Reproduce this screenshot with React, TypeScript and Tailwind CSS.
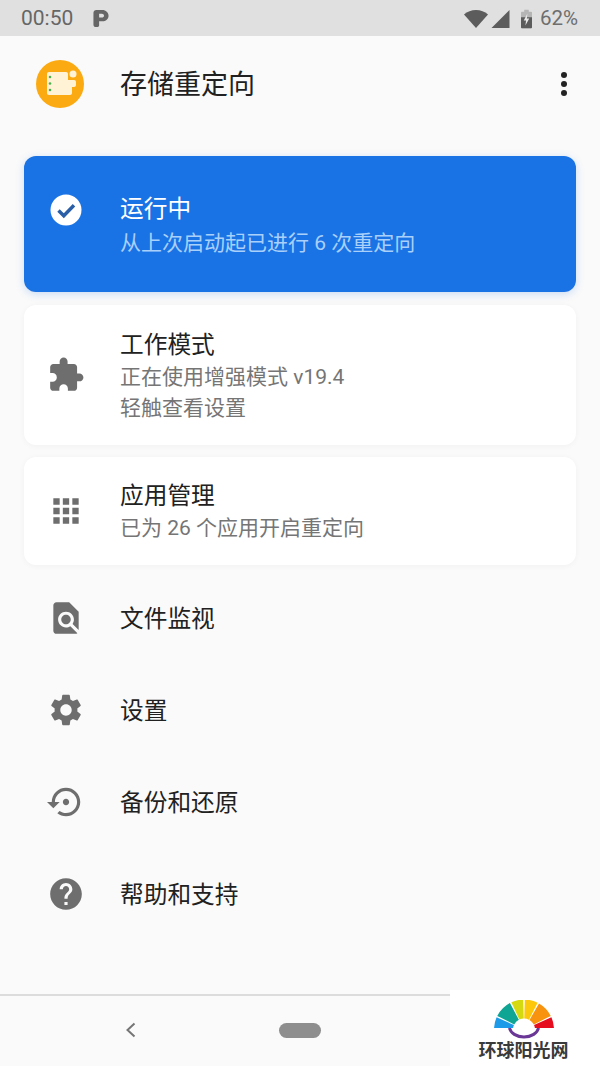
import { FC, ReactNode } from "react";

const cjk = "font-['Roboto','Noto_Sans_CJK_SC',sans-serif]";

const Icon: FC<{ d: string; className?: string }> = ({ d, className }) => (
  <svg viewBox="0 0 24 24" className={className} fill="currentColor">
    <path d={d} />
  </svg>
);

const paths = {
  extension:
    "M20.5 11H19V7c0-1.1-.9-2-2-2h-4V3.5C13 2.12 11.88 1 10.5 1S8 2.12 8 3.5V5H4c-1.1 0-1.99.9-1.99 2v3.8H3.5c1.49 0 2.7 1.21 2.7 2.7s-1.21 2.7-2.7 2.7H2V20c0 1.1.9 2 2 2h3.8v-1.5c0-1.49 1.21-2.7 2.7-2.7 1.49 0 2.7 1.21 2.7 2.7V22H17c1.1 0 2-.9 2-2v-4h1.5c1.38 0 2.5-1.12 2.5-2.5S21.88 11 20.5 11z",
  apps: "M4 8h4V4H4v4zm6 12h4v-4h-4v4zm-6 0h4v-4H4v4zm0-6h4v-4H4v4zm6 0h4v-4h-4v4zm6-10v4h4V4h-4zm-6 4h4V4h-4v4zm6 6h4v-4h-4v4zm0 6h4v-4h-4v4z",
  find: "M20 19.59V8l-6-6H6c-1.1 0-1.99.9-1.99 2L4 20c0 1.1.89 2 1.99 2H18c.45 0 .85-.15 1.19-.4l-4.43-4.43c-.8.52-1.74.83-2.76.83-2.76 0-5-2.24-5-5s2.24-5 5-5 5 2.24 5 5c0 1.02-.31 1.96-.83 2.75L20 19.59zM9 13c0 1.66 1.34 3 3 3s3-1.34 3-3-1.34-3-3-3-3 1.34-3 3z",
  settings:
    "M19.14 12.94c.04-.3.06-.61.06-.94 0-.32-.02-.64-.07-.94l2.03-1.58c.18-.14.23-.41.12-.61l-1.92-3.32c-.12-.22-.37-.29-.59-.22l-2.39.96c-.5-.38-1.03-.7-1.62-.94l-.36-2.54c-.04-.24-.24-.41-.48-.41h-3.84c-.24 0-.43.17-.47.41l-.36 2.54c-.59.24-1.13.57-1.62.94l-2.39-.96c-.22-.08-.47 0-.59.22L2.74 8.87c-.12.21-.08.47.12.61l2.03 1.58c-.05.3-.09.63-.09.94s.02.64.07.94l-2.03 1.58c-.18.14-.23.41-.12.61l1.92 3.32c.12.22.37.29.59.22l2.39-.96c.5.38 1.03.7 1.62.94l.36 2.54c.05.24.24.41.48.41h3.84c.24 0 .44-.17.47-.41l.36-2.54c.59-.24 1.13-.56 1.62-.94l2.39.96c.22.08.47 0 .59-.22l1.92-3.32c.12-.22.07-.47-.12-.61l-2.01-1.58zM12 15.6c-1.98 0-3.6-1.62-3.6-3.6s1.62-3.6 3.6-3.6 3.6 1.62 3.6 3.6-1.62 3.6-3.6 3.6z",
  restore:
    "M14 12c0-1.1-.9-2-2-2s-2 .9-2 2 .9 2 2 2 2-.9 2-2zm-2-9c-4.97 0-9 4.03-9 9H0l4 4 4-4H5c0-3.87 3.13-7 7-7s7 3.13 7 7-3.13 7-7 7c-1.51 0-2.91-.49-4.06-1.3l-1.42 1.44C8.04 20.3 9.94 21 12 21c4.97 0 9-4.03 9-9s-4.03-9-9-9z",
  help: "M12 2C6.48 2 2 6.48 2 12s4.48 10 10 10 10-4.48 10-10S17.52 2 12 2zm1 17h-2v-2h2v2zm2.07-7.75l-.9.92C13.45 12.9 13 13.5 13 15h-2v-.5c0-1.1.45-2.1 1.17-2.83l1.24-1.26c.37-.36.59-.86.59-1.41 0-1.1-.9-2-2-2s-2 .9-2 2H8c0-2.21 1.79-4 4-4s4 1.79 4 4c0 .88-.36 1.68-.93 2.25z",
};

const StatusBar = () => (
  <div className="flex h-9 items-center bg-[#e0e0e0] pl-[21px] pr-[22px] pt-[1px] text-[#666]">
    <span className="text-[21px]">00:50</span>
    <svg viewBox="0 0 16 18" className="ml-[20px] h-[17px] w-[16px]" fill="currentColor">
      <path
        fillRule="evenodd"
        d="M3 0h6.500C13 0 16 2.600 16 6s-3 6-6.500 6H6v4.500c0 .8-.7 1.500-1.500 1.500h-2C1.200 18 0 16.800 0 15.500V3C0 1.300 1.300 0 3 0zm3 4v4h3c1.200 0 2.200-.9 2.200-2S10.200 4 9 4H6z"
      />
    </svg>
    <div className="ml-auto flex items-center text-[#5c5c5c]">
      <svg viewBox="0 0 24 18" className="h-[18px] w-[24px]" fill="currentColor">
        <path d="M12 18 0 4.500C3.200 1.700 7.400 0 12 0s8.800 1.700 12 4.500L12 18z" />
      </svg>
      <svg viewBox="0 0 18 18" className="ml-[3px] h-[18px] w-[19px]" fill="currentColor">
        <path d="M18 0v18H0L18 0z" />
      </svg>
      <svg viewBox="0 0 12 20" className="ml-[11px] h-[20px] w-[11px]">
        <path d="M3.500 0h5v2H11c.6 0 1 .4 1 1v16c0 .6-.4 1-1 1H1c-.6 0-1-.4-1-1V3c0-.6.4-1 1-1h2.500V0z" fill="#b5b5b5" />
        <path d="M0 8h12v11c0 .6-.4 1-1 1H1c-.6 0-1-.4-1-1V8z" fill="#5c5c5c" />
        <path d="M7 4 3 11.500h2.500L4.800 17 9 9.500H6.400L7 4z" fill="#e8e8e8" />
      </svg>
      <span className="ml-[8px] text-[20.500px] text-[#6e6e6e]">62%</span>
    </div>
  </div>
);

const Logo = () => (
  <div className="flex h-12 w-12 items-center justify-center rounded-full bg-[#fbaa12]">
    <svg viewBox="0 0 48 48" className="h-12 w-12">
      <path d="M13 12h17c1.200 0 2 .8 2 2v6h6c1.200 0 2 .8 2 2v3c0 1.200-.8 2-2 2h-2v6c0 1.200-.8 2-2 2H13c-1.200 0-2-.8-2-2V14c0-1.200.8-2 2-2z" fill="#fff2d5" />
      <circle cx="37" cy="14" r="3.500" fill="#fff2d5" />
      <circle cx="14" cy="17" r="1.300" fill="#4caf50" />
      <circle cx="14" cy="23.500" r="1.300" fill="#4caf50" />
      <circle cx="14" cy="30" r="1.300" fill="#4caf50" />
    </svg>
  </div>
);

const Row: FC<{ icon: ReactNode; title: string; lines?: string[]; className?: string }> = ({ icon, title, lines, className }) => (
  <div className={`flex items-center ${className ?? ""}`}>
    <div className="flex w-[96px] shrink-0 items-center pl-[23px]">{icon}</div>
    <div className="pt-[2px]">
      <div className="text-[23.700px] leading-[33px] text-[#212121]">{title}</div>
      {lines?.map((l) => (
        <div key={l} className="text-[21px] leading-[31px] text-[#757575]">
          {l}
        </div>
      ))}
    </div>
  </div>
);

// one slice of the coloured fan, angles in degrees
const sector = (a: number, b: number) => {
  const [cx, cy, R, r] = [30, 29.500, 30, 11];
  const p = (rad: number, deg: number) =>
    `${(cx + rad * Math.cos((deg * Math.PI) / 180)).toFixed(2)} ${(cy - rad * Math.sin((deg * Math.PI) / 180)).toFixed(2)}`;
  return `M${p(r, a)} L${p(R, a)} A${R} ${R} 0 0 1 ${p(R, b)} L${p(r, b)} A${r} ${r} 0 0 0 ${p(r, a)} Z`;
};

const fan = [
  { a: 180, b: 156, c: "#1e9be8" },
  { a: 153, b: 118, c: "#0fa594" },
  { a: 115, b: 91.500, c: "#d5d90f" },
  { a: 88.500, b: 63, c: "#fdc70b" },
  { a: 60, b: 27, c: "#f7930e" },
  { a: 24, b: 0, c: "#e60d1e" },
];

const Watermark = () => (
  <div className="absolute bottom-0 right-0 flex h-[76px] w-[150px] flex-col items-center bg-white pr-[3px] pt-[10px]">
    <svg viewBox="0 0 60 28" className="h-[28px] w-[60px]">
      {fan.map((s) => (
        <path key={s.c} d={sector(s.a, s.b)} fill={s.c} />
      ))}
    </svg>
    <svg viewBox="0 0 32 11" className="h-[11px] w-[32px]" fill="none">
      <path d="M1.500 0c1 5 7 9 14.500 9S29.500 5 30.500 0" stroke="#6a3796" strokeWidth="3" />
    </svg>
    <div className="mt-[3px] font-['Liberation_Serif','Noto_Sans_CJK_SC',serif] text-[18px] font-bold leading-[18px] text-[#3a3a3a]">
      环球阳光网
    </div>
  </div>
);

export default function App() {
  const iconCls = "h-[38px] w-[38px] text-[#6e6e6e]";
  return (
    <div className={`relative flex h-[1066px] w-[600px] flex-col overflow-hidden bg-[#fafafa] ${cjk}`}>
      <StatusBar />
      <div className="flex h-[96px] items-center pl-[36px] pr-[33px]">
        <Logo />
        <div className="ml-[36px] pt-[3px] text-[27px] leading-none text-[#212121]">存储重定向</div>
        <div className="ml-auto flex flex-col gap-[3px]">
          <span className="h-[6px] w-[6px] rounded-full bg-[#222]" />
          <span className="h-[6px] w-[6px] rounded-full bg-[#222]" />
          <span className="h-[6px] w-[6px] rounded-full bg-[#222]" />
        </div>
      </div>

      <div className="mx-6 mt-6 flex flex-col">
        <div className="flex h-[136px] items-start rounded-xl bg-[#1a73e4] pt-[36px] shadow-[0_2px_8px_rgba(26,115,228,0.22)]">
          <div className="mt-[-1px] flex w-[96px] shrink-0 items-center pl-[23px]">
            <svg viewBox="0 0 38 38" className="h-[38px] w-[38px]">
              <circle cx="19" cy="19" r="15.500" fill="#fff" />
              <path d="m11.500 19.500 5.300 5.300 10.200-10.600" stroke="#2a5fa8" strokeWidth="3.400" fill="none" />
            </svg>
          </div>
          <div>
            <div className="text-[23.700px] leading-[34px] text-white">运行中</div>
            <div className="text-[21px] leading-[34px] text-[#a9d0fb]">从上次启动起已进行 6 次重定向</div>
          </div>
        </div>

        <Row
          className="mt-[13px] h-[140px] rounded-xl bg-white shadow-[0_1px_6px_rgba(0,0,0,0.04)]"
          icon={<Icon d={paths.extension} className={iconCls} />}
          title="工作模式"
          lines={["正在使用增强模式 v19.4", "轻触查看设置"]}
        />
        <Row
          className="mt-[12px] h-[108px] rounded-xl bg-white shadow-[0_1px_6px_rgba(0,0,0,0.04)]"
          icon={<Icon d={paths.apps} className={iconCls} />}
          title="应用管理"
          lines={["已为 26 个应用开启重定向"]}
        />
        <Row className="mt-[7px] h-[92px]" icon={<Icon d={paths.find} className={iconCls} />} title="文件监视" />
        <Row className="h-[92px]" icon={<Icon d={paths.settings} className={iconCls} />} title="设置" />
        <Row className="h-[92px]" icon={<Icon d={paths.restore} className={iconCls} />} title="备份和还原" />
        <Row className="h-[92px]" icon={<Icon d={paths.help} className={iconCls} />} title="帮助和支持" />
      </div>

      <div className="absolute bottom-0 left-0 right-0 flex h-[72px] items-center border-t-2 border-[#dcdcdc] bg-[#fafafa] pb-[2px] pl-[125px]">
        <svg viewBox="0 0 12 16" className="h-[16px] w-[12px]" fill="none">
          <path d="M9.500 1.500 2.500 8l7 6.500" stroke="#757575" strokeWidth="2" />
        </svg>
        <span className="ml-[142px] h-[15px] w-[42px] rounded-full bg-[#8e8e8e]" />
      </div>
      <Watermark />
    </div>
  );
}
